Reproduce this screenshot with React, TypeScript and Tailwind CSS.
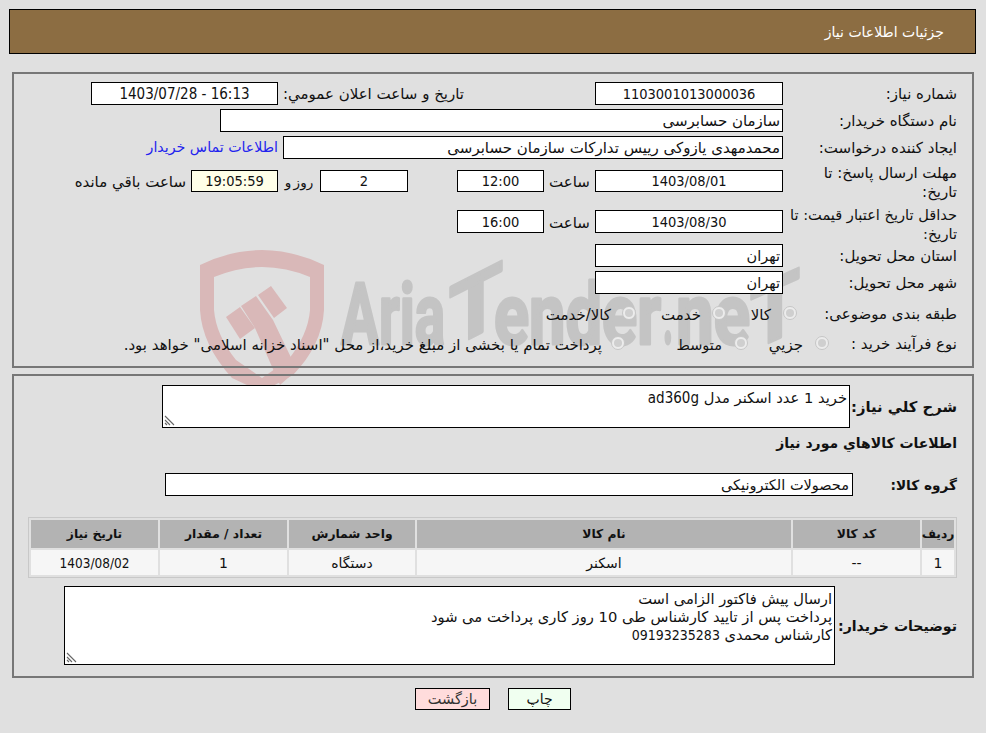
import React from 'react';

const Num = ({ className = 'text-[14.5px]', children }: { className?: string; children: React.ReactNode }) => (
  <span dir="ltr" className={`font-['DejaVu_Sans_Condensed','DejaVu_Sans',sans-serif] ${className}`}>{children}</span>
);

const Box = ({ className = '', children }: { className?: string; children?: React.ReactNode }) => (
  <div className={`border border-black bg-white flex items-center shrink-0 whitespace-nowrap ${className}`}>{children}</div>
);

const Radio = () => (
  <span className="w-[14px] h-[14px] mt-[1px] shrink-0 rounded-full border border-[#c6c6c6] bg-[#ececec] flex items-center justify-center">
    <span className="w-[8px] h-[8px] rounded-full bg-[#cfcfcf]" />
  </span>
);

const ResizeGrip = () => (
  <svg className="absolute left-[1px] bottom-[1px]" width="11" height="11" viewBox="0 0 11 11">
    <path d="M1 1 L10 10 M1 5 L6 10 M1 8 L3 10" stroke="#666" strokeWidth="1.1" />
  </svg>
);

export default function App() {
  return (
    <div dir="rtl" className="relative w-[986px] h-[733px] overflow-hidden bg-[#e0e0e0] text-[#111] font-['DejaVu_Sans',sans-serif] text-[15px] leading-[18px]">
      {/* Watermark sits under the panels, the white boxes cover it */}
      <div dir="ltr" className="absolute left-0 top-0">
        <svg width="986" height="733" viewBox="0 0 986 733">
          <g fill="#d9b8b8">
            <path fillRule="evenodd" d="M200 265 Q262 235 324 265 L324 310 Q322 345 293 375 L262 392 L232 378 Q202 345 200 310 Z M214 277 Q262 257 310 277 L310 310 Q308 335 288 360 L262 378 L236 360 Q216 335 214 310 Z" />
            <path d="M226 317 L240 307 L255 328 L240 339 Z" />
            <path d="M241 306 L256 296 L273 320 L297 370 L280 385 L255 328 Z" />
            <path d="M258 295 L271 286 L287 308 L274 318 Z" />
          </g>
          <g fill="#c4c4c4" stroke="#c4c4c4" strokeWidth="3" strokeLinejoin="round" fontFamily="Roboto, sans-serif" fontWeight="700" fontSize="86">
            <text x="341" y="344" textLength="104" lengthAdjust="spacingAndGlyphs">Aria</text>
            <text x="0" y="0" textLength="54" lengthAdjust="spacingAndGlyphs" transform="translate(449 349) skewY(-27)">T</text>
            <text x="494" y="344" textLength="167" lengthAdjust="spacingAndGlyphs">ender</text>
            <text x="663" y="344" textLength="10" lengthAdjust="spacingAndGlyphs">.</text>
            <text x="676" y="344" textLength="74" lengthAdjust="spacingAndGlyphs">ne</text>
            <text x="0" y="0" textLength="50" lengthAdjust="spacingAndGlyphs" transform="translate(750 351) skewY(-24)">T</text>
          </g>
        </svg>
      </div>

      {/* Header */}
      <div className="relative mt-[9px] ml-[9px] mr-[10px] h-[45px] bg-[#8c6d42] border border-black flex items-center pr-[31px] text-white text-[14px]">
        جزئیات اطلاعات نیاز
      </div>

      {/* Top panel */}
      <div className="relative mt-[18px] ml-[12px] mr-[12px] h-[296px] border-2 border-[#777] pt-[8px] pr-[15px] flex flex-col">
        <div className="flex h-[27px] items-start">
          <div className="w-[174px] shrink-0 pt-[3px]">شماره نیاز:</div>
          <Box className="w-[188px] h-[23px] justify-center"><Num>1103001013000036</Num></Box>
          <div className="w-[317px] shrink-0 pt-[3px] pr-[131px] whitespace-nowrap">تاریخ و ساعت اعلان عمومي:</div>
          <Box className="w-[187px] h-[23px] justify-center"><Num className="text-[15px]">1403/07/28 - 16:13</Num></Box>
        </div>
        <div className="flex h-[27px] items-start">
          <div className="w-[174px] shrink-0 pt-[3px]">نام دستگاه خریدار:</div>
          <Box className="w-[563px] h-[23px] pr-[2px]">سازمان حسابرسی</Box>
        </div>
        <div className="flex h-[34px] items-start">
          <div className="w-[174px] shrink-0 pt-[3px]">ایجاد کننده درخواست:</div>
          <Box className="w-[500px] h-[23px] pr-[2px]">محمدمهدی یازوکی رییس تدارکات سازمان حسابرسی</Box>
          <span className="mr-[5px] mt-[2px] text-[#2222ee] text-[14.2px] whitespace-nowrap">اطلاعات تماس خریدار</span>
        </div>
        <div className="flex h-[40px] items-start">
          <div className="w-[174px] shrink-0 -mt-[6px] leading-[19px] whitespace-nowrap">مهلت ارسال پاسخ: تا<br />تاریخ:</div>
          <Box className="w-[188px] h-[22px] justify-center"><Num>1403/08/01</Num></Box>
          <span className="w-[51px] shrink-0 text-center mt-[3px]">ساعت</span>
          <Box className="w-[87px] h-[22px] justify-center"><Num>12:00</Num></Box>
          <span className="w-[49px] shrink-0" />
          <Box className="w-[88px] h-[22px] justify-center"><Num>2</Num></Box>
          <span className="w-[42px] shrink-0 text-center mt-[3px] text-[13.5px] [word-spacing:-2px]">روز و</span>
          <Box className="w-[87px] h-[22px] justify-center !bg-[#ffffe8]"><Num>19:05:59</Num></Box>
          <span className="mr-[5px] mt-[3px] whitespace-nowrap">ساعت باقي مانده</span>
        </div>
        <div className="flex h-[34px] items-start">
          <div className="w-[174px] shrink-0 -mt-[5px] leading-[19px] whitespace-nowrap text-[14.6px]">حداقل تاریخ اعتبار قیمت: تا<br />تاریخ:</div>
          <Box className="w-[188px] h-[23px] justify-center"><Num>1403/08/30</Num></Box>
          <span className="w-[51px] shrink-0 text-center mt-[4px]">ساعت</span>
          <Box className="w-[87px] h-[23px] justify-center"><Num>16:00</Num></Box>
        </div>
        <div className="flex h-[27px] items-start">
          <div className="w-[174px] shrink-0 pt-[3px]">استان محل تحویل:</div>
          <Box className="w-[188px] h-[23px] pr-[2px] text-[14.5px]">تهران</Box>
        </div>
        <div className="flex h-[34px] items-start">
          <div className="w-[174px] shrink-0 pt-[3px]">شهر محل تحویل:</div>
          <Box className="w-[188px] h-[23px] pr-[2px] text-[14.5px]">تهران</Box>
        </div>
        <div className="flex h-[30px] items-start">
          <div className="w-[160px] shrink-0">طبقه بندی موضوعی:</div>
          <Radio />
          <span className="mr-[12px] w-[45px] shrink-0 mt-[1px]">کالا</span>
          <Radio />
          <span className="mr-[11px] w-[65px] shrink-0 mt-[1px]">خدمت</span>
          <Radio />
          <span className="mr-[11px] mt-[1px] whitespace-nowrap">کالا/خدمت</span>
        </div>
        <div className="flex items-start">
          <div className="w-[128px] shrink-0">نوع فرآیند خرید :</div>
          <Radio />
          <span className="mr-[12px] w-[55px] shrink-0 mt-[1px]">جزیي</span>
          <Radio />
          <span className="mr-[12px] w-[97px] shrink-0 mt-[1px] text-[14.5px]">متوسط</span>
          <Radio />
          <span className="mr-[9px] mt-[1px] whitespace-nowrap">پرداخت تمام یا بخشی از مبلغ خرید،از محل "اسناد خزانه اسلامی" خواهد بود.</span>
        </div>
      </div>

      {/* Bottom panel */}
      <div className="relative mt-[6px] ml-[12px] mr-[12px] h-[304px] border-2 border-[#777] pt-[9px] pr-[15px]">
        <div className="flex h-[43px] items-center">
          <div className="w-[107px] shrink-0 font-bold text-[14.8px] mt-[1px]">شرح کلي نیاز:</div>
          <div className="relative w-[688px] h-[43px] shrink-0 border border-black bg-white pr-[2px] pt-[3px] text-[14.7px]">
            خرید 1 عدد اسکنر مدل <Num className="text-[15px]">ad360g</Num>
            <ResizeGrip />
          </div>
        </div>
        <div className="h-[45px] pt-[6px] font-bold text-[14px]">اطلاعات کالاهاي مورد نیاز</div>
        <div className="flex h-[23px] items-center">
          <div className="w-[104px] shrink-0 font-bold text-[13.7px]">گروه کالا:</div>
          <Box className="w-[688px] h-[23px] pr-[3px] text-[14.5px]">محصولات الکترونیکی</Box>
        </div>
        <div className="mt-[21px] border border-[#c8c8c8] p-[2px] w-[929px]">
          <div className="grid grid-cols-[32px_127px_374px_126px_127px_127px] gap-[2px] text-center">
            {['ردیف', 'کد کالا', 'نام کالا', 'واحد شمارش', 'تعداد / مقدار', 'تاریخ نیاز'].map((h) => (
              <div key={h} className="h-[28px] bg-[#b3b3b3] font-bold flex items-center justify-center text-[12.3px] whitespace-nowrap">{h}</div>
            ))}
            {['1', '--', 'اسکنر', 'دستگاه', '1'].map((c, i) => (
              <div key={i} className="h-[25px] bg-[#f6f6f6] flex items-center justify-center text-[14px]">{c}</div>
            ))}
            <div className="h-[25px] bg-[#f6f6f6] flex items-center justify-center"><Num className="text-[13.5px]">1403/08/02</Num></div>
          </div>
        </div>
        <div className="flex mt-[8px] h-[79px] items-center">
          <div className="w-[122px] shrink-0 font-bold text-[14.1px] whitespace-nowrap">توضیحات خریدار:</div>
          <div className="relative w-[771px] h-[79px] shrink-0 border border-black bg-white pr-[2px] pt-[3px] text-[14.7px]">
            ارسال پیش فاکتور الزامی است
            <br />
            پرداخت پس از تایید کارشناس طی 10 روز کاری پرداخت می شود
            <br />
            کارشناس محمدی <Num className="text-[14px]">09193235283</Num>
            <ResizeGrip />
          </div>
        </div>
      </div>

      {/* Buttons */}
      <div className="relative flex mt-[10px] mr-[415px] gap-[18px]">
        <div className="w-[63px] h-[22px] border border-black bg-[#f0fff0] flex items-center justify-center text-[14px]">چاپ</div>
        <div className="w-[75px] h-[22px] border border-black bg-[#ffdcdc] flex items-center justify-center text-[14.5px] text-[#333]">بازگشت</div>
      </div>
    </div>
  );
}
